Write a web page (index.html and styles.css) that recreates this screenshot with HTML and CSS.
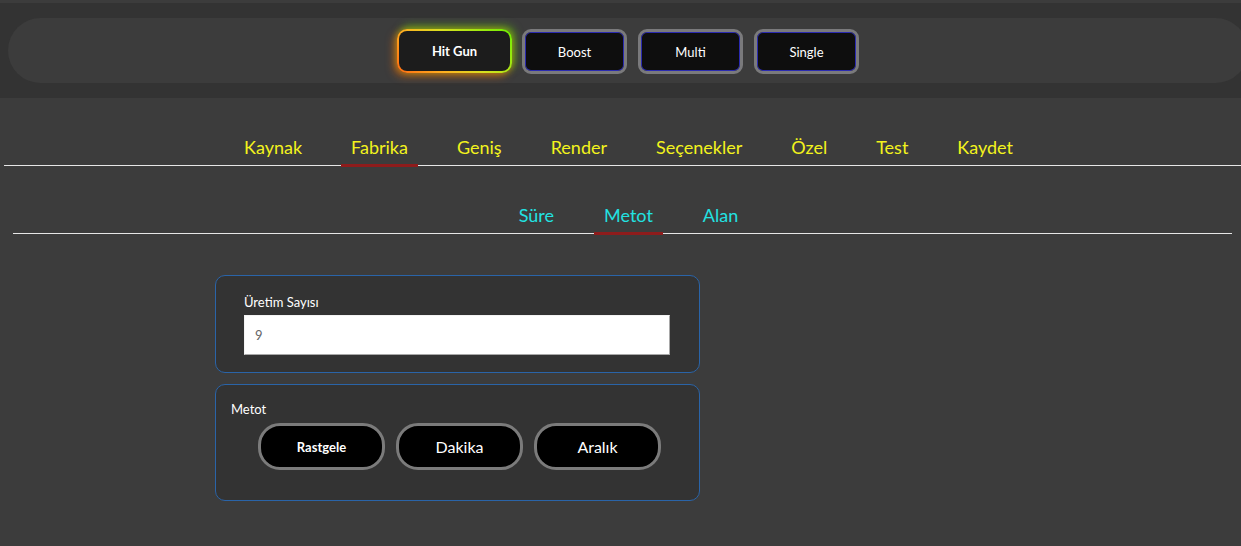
FILE: index.html
```html
<!DOCTYPE html>
<html lang="tr">
<head>
<meta charset="utf-8">
<title>Panel</title>
<link rel="stylesheet" href="styles.css">
</head>
<body>
<div class="top-strip"></div>
<header class="header">
  <div class="pill">
    <button class="mode mode-active">Hit Gun</button>
    <button class="mode">Boost</button>
    <button class="mode">Multi</button>
    <button class="mode">Single</button>
  </div>
</header>
<nav class="nav">
  <ul class="tabs main-tabs">
    <li class="tab">Kaynak</li>
    <li class="tab active">Fabrika</li>
    <li class="tab">Geniş</li>
    <li class="tab">Render</li>
    <li class="tab">Seçenekler</li>
    <li class="tab">Özel</li>
    <li class="tab">Test</li>
    <li class="tab">Kaydet</li>
  </ul>
</nav>
<nav class="subnav">
  <ul class="tabs sub-tabs">
    <li class="tab">Süre</li>
    <li class="tab active">Metot</li>
    <li class="tab">Alan</li>
  </ul>
</nav>
<main class="content">
  <section class="card card-input">
    <label class="field-label">Üretim Sayısı</label>
    <input class="field" type="text" value="9">
  </section>
  <section class="card card-method">
    <div class="method-label">Metot</div>
    <div class="method-row">
      <button class="method method-bold">Rastgele</button>
      <button class="method">Dakika</button>
      <button class="method">Aralık</button>
    </div>
  </section>
</main>
</body>
</html>
```
FILE: styles.css
```css
html, body {
  margin: 0;
  padding: 0;
}
body {
  background: #3c3c3c;
  font-family: Lato, "Open Sans", sans-serif;
  color: #fff;
  width: 1241px;
  height: 546px;
  overflow: hidden;
}
.top-strip {
  height: 3px;
  background: #3c3c3c;
}
.header {
  background: #333333;
  padding: 15px 0 15px 8px;
}
.pill {
  width: 1240px;
  height: 65px;
  background: #3c3c3c;
  border-radius: 33px;
  display: flex;
  align-items: center;
  justify-content: center;
  gap: 11px;
}
.mode {
  width: 105px;
  height: 45px;
  background: #0e0e0e;
  color: #fff;
  border: 3px solid #7a7a7c;
  border-radius: 9px;
  box-shadow: inset 0 0 0 1px #2a2ab0;
  font-family: inherit;
  font-size: 13px;
  padding: 0;
  margin-top: 2px;
}
.mode-active {
  width: 115px;
  height: 44px;
  margin-top: 0;
  margin-right: -1px;
  font-weight: 700;
  border: 2px solid transparent;
  border-radius: 10px;
  background:
    linear-gradient(#1c1c1c, #1c1c1c) padding-box,
    linear-gradient(225deg, #6cf000 0%, #d8e020 45%, #ffb020 70%, #ff6a10 100%) border-box;
  box-shadow: -3px 3px 8px rgba(255, 110, 0, 0.55), 3px -3px 8px rgba(110, 240, 0, 0.5), 0 0 6px rgba(255, 220, 0, 0.35);
}
.tabs {
  list-style: none;
  margin: 0;
  padding: 0;
  display: flex;
  justify-content: center;
  border-bottom: 1px solid #e6e6e6;
}
.tab {
  position: relative;
  padding: 4px 10px 6px;
  font-size: 18px;
  line-height: 24px;
}
.tab.active::after {
  content: "";
  position: absolute;
  left: 0;
  right: 0;
  bottom: -2px;
  height: 3px;
  background: #8e1c1c;
}
.nav {
  margin: 33px 0 0 4px;
}
.main-tabs {
  gap: 29px;
  padding-left: 12px;
}
.main-tabs .tab {
  color: #f3f31c;
}
.subnav {
  margin: 33px 9px 0 13px;
}
.sub-tabs {
  gap: 30px;
  padding-left: 12px;
}
.sub-tabs .tab {
  color: #22e2e2;
}
.content {
  margin: 41px 0 0 215px;
  width: 485px;
  display: flex;
  flex-direction: column;
  gap: 11px;
}
.card {
  background: #333333;
  border: 1px solid #2a64a8;
  border-radius: 10px;
}
.card-input {
  padding: 18px 29px 17px 28px;
  display: flex;
  flex-direction: column;
}
.field-label {
  font-size: 13px;
  line-height: 17px;
  margin-bottom: 4px;
}
.field {
  height: 40px;
  box-sizing: border-box;
  border: 1px solid;
  border-color: #f4f4f4 #a8a8a8 #a8a8a8 #f4f4f4;
  background: #fff;
  color: #666;
  font-family: inherit;
  font-size: 13px;
  padding: 0 10px;
  outline: none;
}
.card-method {
  padding: 16px 15px 30px;
}
.method-label {
  font-size: 13px;
  line-height: 17px;
  margin-bottom: 5px;
}
.method-row {
  display: flex;
  gap: 11px;
  padding-left: 27px;
}
.method {
  width: 127px;
  height: 47px;
  background: #000;
  color: #fff;
  border: 3px solid #7b7b7b;
  border-radius: 22px;
  font-family: inherit;
  font-size: 16px;
  padding: 0;
}
.method-bold {
  font-size: 13px;
  font-weight: 700;
}
```
